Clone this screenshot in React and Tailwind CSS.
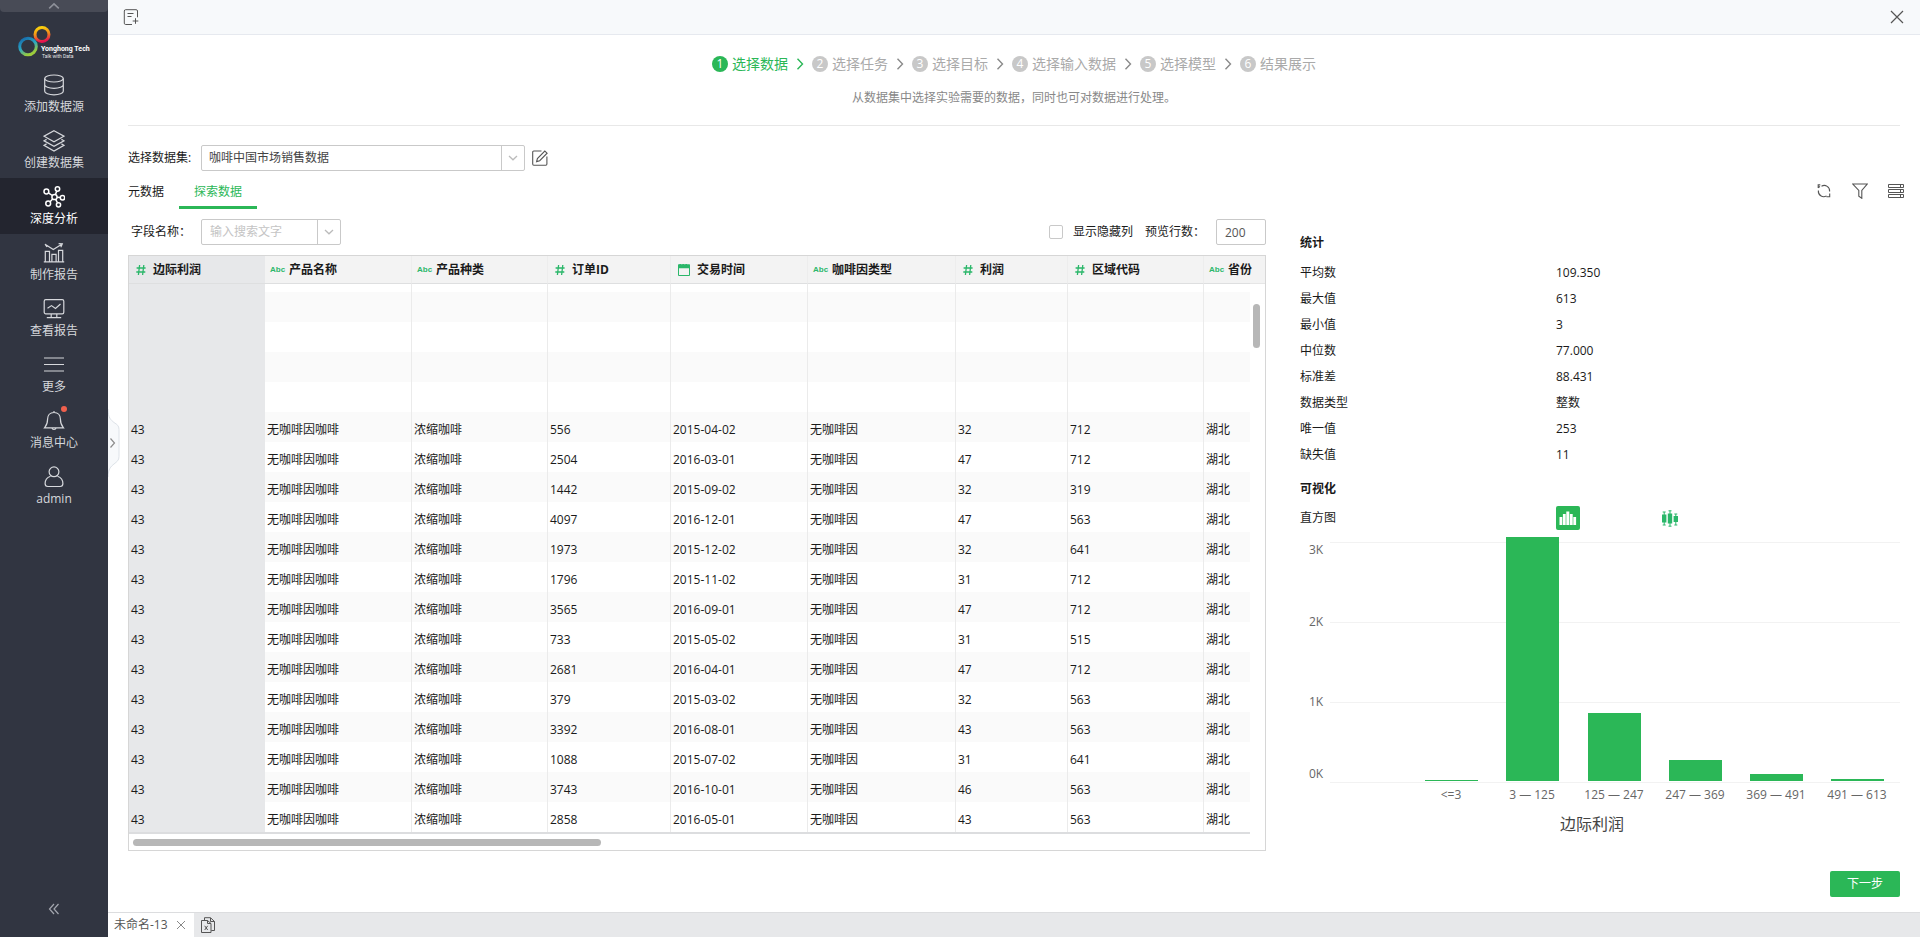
import React from "react";

const navItems = [
  { label: "添加数据源", icon: "database" },
  { label: "创建数据集", icon: "layers" },
  { label: "深度分析", icon: "network", active: true },
  { label: "制作报告", icon: "chart" },
  { label: "查看报告", icon: "monitor" },
  { label: "更多", icon: "menu" },
  { label: "消息中心", icon: "bell", badge: true },
  { label: "admin", icon: "user" },
];

const steps = ["选择数据", "选择任务", "选择目标", "选择输入数据", "选择模型", "结果展示"];

const columns = [
  { name: "边际利润", type: "num" },
  { name: "产品名称", type: "str" },
  { name: "产品种类", type: "str" },
  { name: "订单ID", type: "num" },
  { name: "交易时间", type: "date" },
  { name: "咖啡因类型", type: "str" },
  { name: "利润", type: "num" },
  { name: "区域代码", type: "num" },
  { name: "省份", type: "str" },
];

const orders = [
  ["556", "2015-04-02", "32", "712"],
  ["2504", "2016-03-01", "47", "712"],
  ["1442", "2015-09-02", "32", "319"],
  ["4097", "2016-12-01", "47", "563"],
  ["1973", "2015-12-02", "32", "641"],
  ["1796", "2015-11-02", "31", "712"],
  ["3565", "2016-09-01", "47", "712"],
  ["733", "2015-05-02", "31", "515"],
  ["2681", "2016-04-01", "47", "712"],
  ["379", "2015-03-02", "32", "563"],
  ["3392", "2016-08-01", "43", "563"],
  ["1088", "2015-07-02", "31", "641"],
  ["3743", "2016-10-01", "46", "563"],
  ["2858", "2016-05-01", "43", "563"],
];

const blankRow = Array(9).fill("");
const rows = [
  blankRow,
  blankRow,
  blankRow,
  blankRow,
  ...orders.map(([id, date, profit, area]) => [
    "43", "无咖啡因咖啡", "浓缩咖啡", id, date, "无咖啡因", profit, area, "湖北",
  ]),
];

const stats = [
  ["平均数", "109.350"],
  ["最大值", "613"],
  ["最小值", "3"],
  ["中位数", "77.000"],
  ["标准差", "88.431"],
  ["数据类型", "整数"],
  ["唯一值", "253"],
  ["缺失值", "11"],
];

const bars = [
  { label: "<=3", x: 125, h: 1 },
  { label: "3 — 125", x: 206, h: 244 },
  { label: "125 — 247", x: 288, h: 68 },
  { label: "247 — 369", x: 369, h: 21 },
  { label: "369 — 491", x: 450, h: 7 },
  { label: "491 — 613", x: 531, h: 2 },
];

const navPaths = {
  database: (
    <>
      <ellipse cx="11" cy="4.5" rx="9.3" ry="3.5" />
      <path d="M1.7 4.5v12.8c0 2 4.2 3.5 9.3 3.5s9.3-1.5 9.3-3.5V4.5M1.7 10.8c0 2 4.2 3.5 9.3 3.5s9.3-1.5 9.3-3.5" />
    </>
  ),
  layers: (
    <path d="M11 .8l10 5.4-10 5.6L1 6.200z M3.600 9.400L1 10.800l10 5.500 10-5.500-2.600-1.400M3.600 13.900L1 15.300l10 5.800 10-5.800-2.600-1.400" />
  ),
  network: (
    <>
      <circle cx="11.500" cy="11" r="2.600" />
      <circle cx="3.400" cy="5.500" r="2.400" />
      <circle cx="14.500" cy="3" r="2.200" />
      <circle cx="19.500" cy="11.800" r="2.200" />
      <circle cx="5.200" cy="17.500" r="2.400" />
      <circle cx="15.500" cy="18.800" r="2.100" />
      <path d="M5.400 6.800l3.900 2.700M13.800 5.100l-1.400 3.400M14.100 11.200l3.200.4M9.600 12.900l-2.700 3M12.700 13.400l1.800 3.500" />
    </>
  ),
  chart: (
    <path d="M.8 19.800h20.400M2.300 19.800V9.300h4.200v10.500M8.900 19.800v-7.500h4.200v7.500M15.500 19.800V8.300h4.200v11.500M2 2.200l8.300 5.300 8.900-5.600M15.600 1.700l3.700.1-1.500 3.400M2 2.200l2 2.800" />
  ),
  monitor: (
    <>
      <rect x="1.200" y="1.600" width="19.600" height="14.200" rx="1.600" />
      <path d="M4.500 10.200l4-2.600 4 2.800 5-4.400M8.200 16v3.400M13.800 16v3.400M3.800 19.600h14.400" />
    </>
  ),
  menu: <path d="M1 4h20M1 10.500h20M1 17h20" />,
  bell: (
    <path d="M11 1v1.600M11 2.500c-4.100 0-6.400 3-6.400 6.600 0 5.400-1.300 6.600-3.100 8.800h19c-1.800-2.200-3.100-3.400-3.100-8.800 0-3.600-2.300-6.600-6.400-6.600zM9 18.200c.2 1.700 3.800 1.700 4 0" />
  ),
  user: (
    <>
      <circle cx="11" cy="5.800" r="4.900" />
      <path d="M7.500 10.300c-3.600 1.300-5.400 4-5.400 7.200 0 2 .9 3 2.700 3h12.400c1.800 0 2.700-1 2.700-3 0-3.200-1.800-5.900-5.400-7.200" />
    </>
  ),
};

function Chevron({ className }) {
  return (
    <svg className={className} viewBox="0 0 10 6" fill="none" stroke="currentColor" strokeWidth="1.300" aria-hidden="true">
      <path d="M1 1l4 3.800L9 1" />
    </svg>
  );
}

function Logo() {
  return (
    <svg className="h-[54px] w-full" viewBox="0 12 108 54" role="img" aria-label="Yonghong Tech">
      <defs>
        <linearGradient id="cool" x1="0" y1="0" x2="0.500" y2="1">
          <stop offset="0" stopColor="#1463a8" />
          <stop offset="0.550" stopColor="#2aa6c4" />
          <stop offset="1" stopColor="#9ccb3b" />
        </linearGradient>
        <linearGradient id="warm" x1="0.300" y1="0" x2="0.500" y2="1">
          <stop offset="0" stopColor="#fbd20c" />
          <stop offset="0.500" stopColor="#f08a1c" />
          <stop offset="1" stopColor="#e5124f" />
        </linearGradient>
      </defs>
      <circle cx="42" cy="34.500" r="7" fill="none" stroke="url(#warm)" strokeWidth="3" />
      <circle cx="28" cy="46.500" r="8.300" fill="none" stroke="url(#cool)" strokeWidth="3" />
      <text x="41" y="51" fill="#fff" className="font-['Roboto'] text-[7px] font-bold">Yonghong Tech</text>
      <text x="42" y="58" fill="#e4e5e8" className="font-['Roboto'] text-[5px]">Talk with Data</text>
    </svg>
  );
}

function Sidebar() {
  return (
    <aside className="flex w-[108px] shrink-0 flex-col bg-[#313541]">
      <button aria-label="收起" className="flex h-3 items-center justify-center rounded-b-sm bg-[#484b56] text-[#8d9099]">
        <Chevron className="h-2 w-3 rotate-180" />
      </button>
      <Logo />
      <nav className="flex flex-col">
        {navItems.map((item) => (
          <a
            key={item.label}
            href="#"
            className={
              "relative flex h-14 flex-col items-center gap-0.5 pt-2 leading-[18px] " +
              (item.active ? "bg-[#23252f] text-white" : "text-[#d6d8dc]")
            }
          >
            <svg className="size-[22px]" viewBox="0 0 22 22" fill="none" stroke="currentColor" strokeWidth={item.active ? "1.500" : "1.200"} aria-hidden="true">
              {navPaths[item.icon]}
            </svg>
            <span>{item.label}</span>
            {item.badge && <i className="absolute top-1 left-[61px] size-1.5 rounded-full bg-[#f0604d]" />}
          </a>
        ))}
      </nav>
      <button aria-label="折叠菜单" className="mx-auto mt-auto mb-5 flex h-4 w-6 items-center justify-center text-[#a3a6ae]">
        <svg className="h-3 w-3" viewBox="0 0 12 12" fill="none" stroke="currentColor" strokeWidth="1.200" aria-hidden="true">
          <path d="M6 1L1.500 6 6 11M10.500 1L6 6l4.500 5" />
        </svg>
      </button>
    </aside>
  );
}

function Steps() {
  return (
    <ol className="flex items-center justify-center text-sm leading-5">
      {steps.map((step, i) => (
        <li key={step} className={"flex items-center " + (i === 0 ? "text-[#2bb757]" : "text-[#aaaaaa]")}>
          <span
            className={
              "mr-1 flex size-4 items-center justify-center rounded-full text-xs text-white " +
              (i === 0 ? "bg-[#2bb757]" : "bg-[#c8c8c8]")
            }
          >
            {i + 1}
          </span>
          {step}
          {i < steps.length - 1 && (
            <svg
              className={"mx-2 h-3 w-2 " + (i === 0 ? "text-[#2bb757]" : "text-[#8a8a8a]")}
              viewBox="0 0 8 12"
              fill="none"
              stroke="currentColor"
              strokeWidth="1.400"
              aria-hidden="true"
            >
              <path d="M1.500 .8L6.500 6l-5 5.200" />
            </svg>
          )}
        </li>
      ))}
    </ol>
  );
}

function TypeIcon({ type }) {
  if (type === "str")
    return <span className="w-[14px] shrink-0 font-['Liberation_Sans'] text-[8px] font-bold leading-3 text-[#2bb76a]">Abc</span>;
  if (type === "date")
    return (
      <svg className="size-3 shrink-0" viewBox="0 0 12 12" aria-hidden="true">
        <path d="M.5 1h11v10.500H.5z" fill="none" stroke="#2bb76a" />
        <path d="M0 .6h1.500V0h1.400v.6h1.600V0h1.400v.6h1.600V0H9v.6h3V4.200H0z" fill="#2bb76a" />
      </svg>
    );
  return (
    <svg className="h-3 w-[10px] shrink-0" viewBox="0 0 10 12" fill="none" stroke="#2bb76a" strokeWidth="1.300" aria-hidden="true">
      <path d="M3.600 1L2.400 11M7.800 1L6.600 11M.6 4h9M.3 8h9" />
    </svg>
  );
}

function DataGrid() {
  return (
    <div className="border border-[#d6d6d6]">
      <div className="flex">
        <table className="relative z-10 w-full table-fixed border-separate border-spacing-0 text-left">
          <colgroup>
            <col className="w-[136px]" />
            <col className="w-[147px]" />
            <col className="w-[136px]" />
            <col className="w-[123px]" />
            <col className="w-[137px]" />
            <col className="w-[148px]" />
            <col className="w-[112px]" />
            <col className="w-[136px]" />
            <col />
          </colgroup>
          <thead>
            <tr className="h-7">
              {columns.map((c, i) => (
                <th
                  key={c.name}
                  className={
                    "border-b border-b-[#dedfe0] p-0 font-bold " +
                    (i === 0 ? "bg-[#e7e8ea]" : "bg-[#f3f3f3]") +
                    (i > 0 && i < 8 ? " border-r border-r-[#ededed]" : "")
                  }
                >
                  <div className={"flex items-center whitespace-nowrap " + (c.type === "str" ? "gap-[5px] pl-[5px]" : "gap-[7px] pl-[7px]")}>
                    <TypeIcon type={c.type} />
                    {c.name}
                  </div>
                </th>
              ))}
            </tr>
          </thead>
          <tbody>
            <tr className="h-2">
              {columns.map((c, i) => (
                <td key={c.name} className={"p-0 " + (i === 0 ? "bg-[#e7e8ea]" : i < 8 ? "border-r border-[#ebebeb]" : "")} />
              ))}
            </tr>
            {rows.map((row, r) => (
              <tr key={r} className={"h-[30px] " + (r % 2 === 0 ? "bg-[#fafafa]" : "bg-white")}>
                {row.map((cell, i) => (
                  <td
                    key={i}
                    className={
                      "px-0.5 pt-1.5 pb-0 leading-[18px] whitespace-nowrap " +
                      (i === 0 ? "bg-[#e7e8ea]" : i < 8 ? "border-r border-[#ebebeb]" : "")
                    }
                  >
                    {cell}
                  </td>
                ))}
              </tr>
            ))}
          </tbody>
        </table>
        <div className="w-[15px] shrink-0">
          <div className="h-7 border-b border-[#e6e6e6] bg-[#f3f3f3]" />
          <div className="ml-[3px] mt-5 h-11 w-[7px] rounded-full bg-[#b7b7b7]" />
        </div>
      </div>
      <div className="mr-[15px] h-0.5 bg-[#dcdddf]" />
      <div className="flex h-4 items-center px-1">
        <div className="h-[7px] w-[468px] rounded-full bg-[#b7b7b7]" />
      </div>
    </div>
  );
}

function Histogram() {
  return (
    <svg className="w-full" viewBox="0 0 600 310" role="img" aria-label="边际利润直方图">
      {[
        ["3K", 12, 24],
        ["2K", 92, 96],
        ["1K", 172, 176],
        ["0K", 252, 248],
      ].map(([label, y, textY]) => (
        <g key={label}>
          <path d={`M30 ${y}.5H600`} stroke="#f2f2f2" />
          <text x="9" y={textY} fill="#666" className="text-xs">{label}</text>
        </g>
      ))}
      {bars.map((b) => (
        <g key={b.label}>
          <rect x={b.x} y={251 - b.h} width="53" height={b.h} fill="#2bb757" />
          <text x={b.x + 26} y="269" textAnchor="middle" fill="#666" className="text-xs">{b.label}</text>
        </g>
      ))}
      <text x="292" y="300" textAnchor="middle" fill="#444" className="text-base">边际利润</text>
    </svg>
  );
}

function StatsPanel() {
  return (
    <section className="flex flex-col pt-[15px]">
      <h2 className="leading-[18px] font-bold">统计</h2>
      <dl className="mt-2 grid grid-cols-[256fr_344fr] leading-[26px]">
        {stats.map(([k, v]) => (
          <React.Fragment key={k}>
            <dt>{k}</dt>
            <dd>{v}</dd>
          </React.Fragment>
        ))}
      </dl>
      <h2 className="mt-3 leading-[18px] font-bold">可视化</h2>
      <div className="mt-2 grid h-6 grid-cols-[256fr_344fr] items-center">
        <span>直方图</span>
        <div className="flex items-center gap-[78px]">
          <button aria-label="直方图" className="flex size-6 items-center justify-center rounded-xs bg-[#2bb757]">
            <svg className="h-4 w-[18px]" viewBox="0 0 18 16" fill="#fff" aria-hidden="true">
              <path d="M.5 7h2.800v8H.5zM3.900 4h2.800v11H3.900zM7.300 1.500h3V15h-3zM10.900 4h2.800v11h-2.800zM14.300 7h2.800v8h-2.800z" />
            </svg>
          </button>
          <button aria-label="箱线图" className="flex size-6 items-center justify-center">
            <svg className="h-[17px] w-4" viewBox="0 0 16 17" aria-hidden="true">
              <path d="M0 4.500h4.400v8H0zM5.800 3.500h4.400v10H5.800zM11.600 6h4.400v6h-4.400z" fill="#2bb76a" />
              <path d="M2.200 2v13M8 .8v15.400M13.800 4v11M.7 2h3M.7 15h3M6.500 .8h3M6.500 16.200h3M12.300 4h3M12.300 15h3" fill="none" stroke="#2bb76a" />
            </svg>
          </button>
        </div>
      </div>
      <Histogram />
    </section>
  );
}

export default function App() {
  return (
    <div className="flex min-h-screen bg-white font-['Open_Sans','Noto_Sans_CJK_SC',sans-serif] text-xs text-[#1a1a1a]">
      <Sidebar />
      <main className="relative flex min-w-0 flex-1 flex-col">
        <button aria-label="展开" className="absolute top-[409px] left-0 h-[68px] w-3">
          <svg className="h-full w-full" viewBox="0 0 12 68" fill="none" aria-hidden="true">
            <path d="M0 0c0 9 3 11 6 13.500 3 2 5 3 5 7v27c0 4-2 5-5 7.500-3 2.500-6 5-6 13" fill="#f7f9fb" stroke="#dde2e8" />
            <path d="M2.500 29.500L6.500 34l-4 4.500" stroke="#8c8c8c" strokeWidth="1.200" />
          </svg>
        </button>

        <header className="flex h-[35px] items-center justify-between border-b border-[#e6e9ef] bg-[#f7f9fb] px-[15px] text-[#555]">
          <button aria-label="新建">
            <svg className="size-4" viewBox="0 0 16 16" fill="none" stroke="currentColor" aria-hidden="true">
              <path d="M9 15.500H2.700c-.9 0-1.400-.5-1.400-1.300V2c0-.9.5-1.300 1.400-1.300h10.400c.9 0 1.400.4 1.400 1.300v6.300M4.500 4.500h6M4.500 7.500h4M12.500 9.200v5.600M9.700 12h5.600" />
            </svg>
          </button>
          <button aria-label="关闭">
            <svg className="size-4" viewBox="0 0 16 16" fill="none" stroke="currentColor" strokeWidth="1.200" aria-hidden="true">
              <path d="M2 2l12 12M14 2L2 14" />
            </svg>
          </button>
        </header>

        <div className="flex flex-1 flex-col px-5">
          <div className="flex flex-col items-center gap-[15px] border-b border-[#e8e8e8] pt-[19px] pb-[18px]">
            <Steps />
            <p className="leading-[18px] text-[#888]">从数据集中选择实验需要的数据，同时也可对数据进行处理。</p>
          </div>

          <div className="flex items-center pt-[19px]">
            <label htmlFor="dataset" className="w-[73px]">选择数据集:</label>
            <div className="relative h-[26px] w-[324px] rounded-xs border border-[#c9c9c9]">
              <select id="dataset" className="h-full w-full appearance-none bg-transparent pr-8 pl-[7px] text-[#444] outline-none">
                <option>咖啡中国市场销售数据</option>
              </select>
              <span className="pointer-events-none absolute inset-y-0 right-0 flex w-[23px] items-center justify-center border-l border-[#c9c9c9] text-[#bbb]">
                <Chevron className="h-1.5 w-2.5" />
              </span>
            </div>
            <button aria-label="编辑" className="ml-[7px] text-[#555]">
              <svg className="size-4" viewBox="0 0 16 16" fill="none" stroke="currentColor" strokeWidth="1.100" aria-hidden="true">
                <path d="M9.500 1H1.800c-.7 0-1.100.4-1.100 1.100v12c0 .7.400 1.100 1.100 1.100h12c.7 0 1.100-.4 1.100-1.100V6.500M4.600 11.600l.8-3L12.800 1l2.300 2.200-7.400 7.500z" />
              </svg>
            </button>
          </div>

          <div className="flex h-[38px] items-end justify-between">
            <div role="tablist" className="flex">
              <button role="tab" aria-selected="false" className="pb-2 leading-[18px]">元数据</button>
              <button role="tab" aria-selected="true" className="ml-[15px] border-b-3 border-[#2bb757] px-[15px] pb-[5px] leading-[18px] text-[#2bb757]">
                探索数据
              </button>
            </div>
            <div className="-mr-1 flex h-9 items-center gap-5 text-[#555]">
              <button aria-label="刷新">
                <svg className="size-4" viewBox="0 0 16 16" fill="none" stroke="currentColor" strokeWidth="1.100" aria-hidden="true">
                  <path d="M5.500 3.200A5.400 5.400 0 0 1 13.600 8.500M4.300 1.900H2.200v3.200M2.300 4.800A6 6 0 0 1 4 3.600M10.500 12.900A5.400 5.400 0 0 1 2.400 7.500M10.500 13.800h3.200v-3.200" />
                </svg>
              </button>
              <button aria-label="筛选">
                <svg className="size-4" viewBox="0 0 16 16" fill="none" stroke="currentColor" strokeWidth="1.100" aria-hidden="true">
                  <path d="M.8 1h14.400L9.800 7.500v7.800l-3-2V7.500z" />
                </svg>
              </button>
              <button aria-label="列表">
                <svg className="size-4" viewBox="0 0 16 16" fill="none" stroke="currentColor" aria-hidden="true">
                  <path d="M.5 1.500h15v3H.5zM.5 6.500h15v3H.5zM.5 11.500h15v3H.5zM12.500 1.500v3M12.500 6.500v3M12.500 11.500v3" />
                </svg>
              </button>
            </div>
          </div>

          <div className="grid grid-cols-[minmax(0,1138fr)_minmax(0,600fr)] gap-x-[34px] pt-[10px]">
            <section className="flex flex-col gap-[10px]">
              <div className="flex items-center">
                <label htmlFor="field" className="w-[73px] pl-[3px]">字段名称：</label>
                <div className="flex h-[26px] w-[140px] rounded-xs border border-[#c9c9c9]">
                  <input id="field" placeholder="输入搜索文字" className="min-w-0 flex-1 px-2 outline-none placeholder:text-[#c4c4c4]" />
                  <button aria-label="展开选项" className="flex w-[23px] items-center justify-center border-l border-[#c9c9c9] text-[#bbb]">
                    <Chevron className="h-1.5 w-2.5" />
                  </button>
                </div>
                <label className="ml-auto flex items-center gap-[10px]">
                  <input type="checkbox" className="size-[14px] appearance-none rounded-xs border border-[#c9c9c9] bg-white" />
                  显示隐藏列
                </label>
                <label htmlFor="preview" className="ml-3 w-[71px]">预览行数：</label>
                <input id="preview" defaultValue="200" className="h-[26px] w-[50px] rounded-xs border border-[#c9c9c9] px-2 text-[#555] outline-none" />
              </div>
              <DataGrid />
            </section>
            <StatsPanel />
          </div>

          <div className="mt-auto mb-[15px] flex justify-end">
            <button className="h-[26px] w-[70px] rounded-xs bg-[#2bb757] text-white">下一步</button>
          </div>
        </div>

        <footer className="flex h-[25px] border-t border-[#dcdddf] bg-[#e7e8ea] text-[#555]">
          <div className="flex w-[86px] items-center justify-between bg-white pr-2 pl-1.5">
            <a href="#">未命名-13</a>
            <button aria-label="关闭标签" className="text-[#888]">
              <svg className="size-2.5" viewBox="0 0 10 10" fill="none" stroke="currentColor" aria-hidden="true">
                <path d="M1 1l8 8M9 1L1 9" />
              </svg>
            </button>
          </div>
          <button aria-label="关闭全部" className="ml-1.5">
            <svg className="size-4" viewBox="0 0 16 16" fill="none" stroke="currentColor" aria-hidden="true">
              <path d="M1.500 3.500h6l3.500 3v9H1.500zM7.500 3.500v3H11M4.500 3.200V.7h6l4 3.800v9h-3.200M10.500 1v3.500h4M4.700 8.800l3 4.200M7.700 8.800l-3 4.200" />
            </svg>
          </button>
        </footer>
      </main>
    </div>
  );
}
